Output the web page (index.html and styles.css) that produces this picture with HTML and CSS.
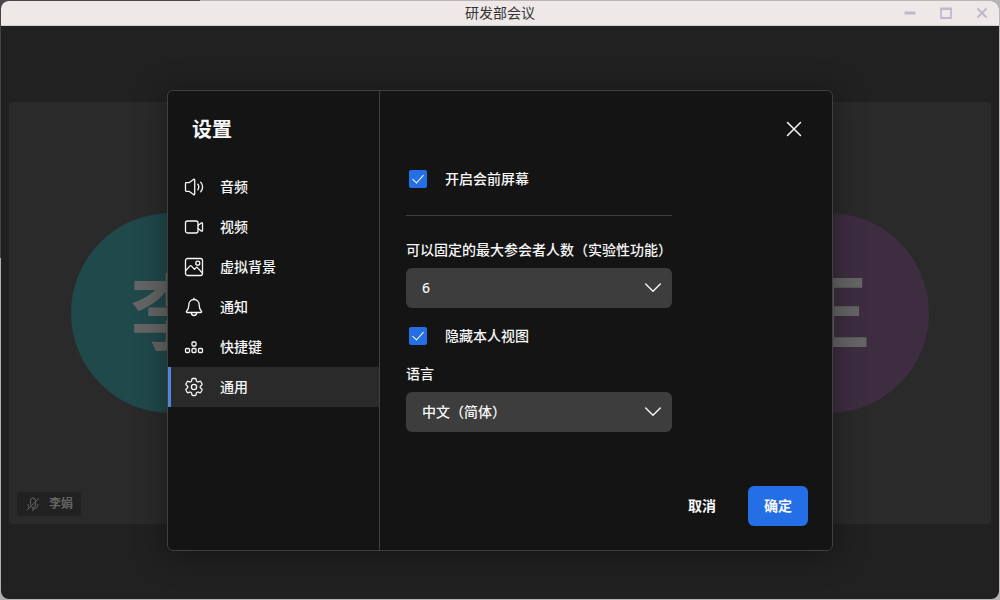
FILE: index.html
```html
<!DOCTYPE html>
<html lang="zh-CN">
  <head>
    <meta charset="UTF-8">
    <meta name="viewport" content="width=device-width, initial-scale=1.0">
    <title>研发部会议</title>
    <link rel="stylesheet" href="styles.css">
  </head>
  <body>
    <div class="window">
      <header class="titlebar">
        <h1>研发部会议</h1>
        <div class="window-controls">
          <button type="button" aria-label="最小化">
            <svg viewBox="0 0 12 12"><path d="M.5 6h11" stroke-width="3" /></svg>
          </button>
          <button type="button" aria-label="最大化">
            <svg viewBox="0 0 12 12"><path d="M1 1v10h10V1" stroke-width="1.8" /><path d="M.1 1.7h11.8" stroke-width="2.6" /></svg>
          </button>
          <button type="button" aria-label="关闭窗口">
            <svg viewBox="0 0 12 12"><path d="M1.5 1.5l9 9M10.5 1.5l-9 9" stroke-width="2" /></svg>
          </button>
        </div>
      </header>

      <main class="stage">
        <div class="tile">
          <div class="avatar avatar-teal">李</div>
          <div class="name-tag">
            <svg viewBox="0 0 14 14">
              <path d="M4.5 8V3.5a2.500 2.500 0 0 1 5 0M9.5 5v3a2.500 2.500 0 0 1-4 2M2 7.500c0 1.500.5 2.500 1.300 3.300M12 7.500c0 2.500-2 4.500-5 4.500M7 12v1.700M1 13L12.800 1.500" />
            </svg>
            <span>李娟</span>
          </div>
        </div>
        <div class="tile"></div>
        <div class="tile">
          <div class="avatar avatar-purple">王</div>
        </div>

        <div class="overlay">
          <section class="dialog" role="dialog" aria-labelledby="dialog-title">
            <aside class="sidebar">
              <h2 id="dialog-title">设置</h2>
              <nav>
                <a class="nav-item" href="#audio">
                  <svg viewBox="0 0 20 20">
                    <path d="M1.500 6.500v7c0 .5.4.8.8.8H5l4.500 3.300c.6.4 1.200 0 1.200-.6V3c0-.6-.6-1-1.200-.6L5 5.700H2.300c-.4 0-.8.3-.8.8z" />
                    <path d="M13.800 7.200c1.200 1.700 1.200 3.900 0 5.600M16.700 5.200c2.300 2.900 2.300 6.700 0 9.600" />
                  </svg>
                  音频
                </a>
                <a class="nav-item" href="#video">
                  <svg viewBox="0 0 20 20">
                    <rect x="1.500" y="4" width="12.500" height="12" rx="2" />
                    <path d="M14 8.500l3.300-2.600c.5-.4 1.200 0 1.200.6v7c0 .6-.7 1-1.200.6L14 11.500" />
                  </svg>
                  视频
                </a>
                <a class="nav-item" href="#background">
                  <svg viewBox="0 0 20 20">
                    <rect x="1.500" y="1.500" width="17" height="17" rx="2" />
                    <circle cx="13.800" cy="6.200" r="2" />
                    <path d="M1.800 13.500l4.300-4.600c.4-.4.8-.4 1.200 0l3.200 3.500 1.700-1.800c.4-.4.8-.4 1.200 0l5 5.400" />
                  </svg>
                  虚拟背景
                </a>
                <a class="nav-item" href="#notifications">
                  <svg viewBox="0 0 20 20">
                    <path d="M10 2.500c-3.200 0-5.200 2.500-5.200 5.700 0 3-.5 4.300-2.100 5.800-.6.600-.3 1.500.5 1.500h13.600c.8 0 1.100-.9.500-1.500-1.600-1.500-2.100-2.800-2.100-5.800 0-3.200-2-5.700-5.200-5.700zM10 1.200v1.300M7.300 15.800a2.700 2.700 0 0 0 5.400 0" />
                  </svg>
                  通知
                </a>
                <a class="nav-item" href="#shortcuts">
                  <svg viewBox="0 0 20 20">
                    <rect x="8" y="5" width="4" height="4" rx="1" />
                    <rect x="1.500" y="11.500" width="4" height="4" rx="1" />
                    <rect x="8" y="11.500" width="4" height="4" rx="1" />
                    <rect x="14.500" y="11.500" width="4" height="4" rx="1" />
                  </svg>
                  快捷键
                </a>
                <a class="nav-item active" href="#general" aria-current="page">
                  <svg viewBox="0 0 20 20">
                    <path d="M8.800 1.500h2.400c.5 0 .8.3.9.8l.3 1.500c.2.8 1 1.300 1.800 1l1.400-.5c.5-.2.900 0 1.200.4l1.200 2.100c.2.4.1.900-.2 1.200l-1.200 1c-.6.500-.6 1.500 0 2l1.200 1c.3.3.4.8.2 1.200l-1.200 2.100c-.3.400-.7.600-1.200.4l-1.400-.5c-.8-.3-1.600.2-1.800 1l-.3 1.500c-.1.500-.4.800-.9.800H8.800c-.5 0-.8-.3-.9-.8l-.3-1.500c-.2-.8-1-1.300-1.800-1l-1.400.5c-.5.200-.9 0-1.200-.4L2 13.200c-.2-.4-.1-.9.2-1.200l1.200-1c.6-.5.6-1.500 0-2L2.200 8c-.3-.3-.4-.8-.2-1.200l1.200-2.100c.3-.4.7-.6 1.200-.4l1.400.5c.8.3 1.600-.2 1.800-1l.3-1.500c.1-.5.4-.8.7-.8z" />
                    <circle cx="10" cy="10" r="2.600" />
                  </svg>
                  通用
                </a>
              </nav>
            </aside>

            <form class="panel">
              <div class="panel-header">
                <button class="close" type="button" aria-label="关闭">
                  <svg viewBox="0 0 16 16"><path d="M1.500 1.500l13 13M14.500 1.500l-13 13" /></svg>
                </button>
              </div>

              <div class="fields">
                <div class="check-row">
                  <input type="checkbox" id="preview" checked>
                  <label for="preview">开启会前屏幕</label>
                </div>
                <hr>
                <label class="field-label" for="max-pinned">可以固定的最大参会者人数（实验性功能）</label>
                <div class="select">
                  <select id="max-pinned">
                    <option>6</option>
                  </select>
                  <svg viewBox="0 0 16 16"><path d="M.7 4L8 11.300 15.300 4" /></svg>
                </div>
                <div class="check-row spaced">
                  <input type="checkbox" id="hide-self" checked>
                  <label for="hide-self">隐藏本人视图</label>
                </div>
                <label class="field-label" for="language">语言</label>
                <div class="select">
                  <select id="language">
                    <option>中文（简体）</option>
                  </select>
                  <svg viewBox="0 0 16 16"><path d="M.7 4L8 11.300 15.300 4" /></svg>
                </div>
              </div>

              <div class="actions">
                <button class="btn" type="button">取消</button>
                <button class="btn btn-primary" type="submit">确定</button>
              </div>
            </form>
          </section>
        </div>
      </main>
    </div>
  </body>
</html>
```

FILE: styles.css
```css
:root {
  --bg: #212121;
  --tile: #2a2a2a;
  --dialog: #141414;
  --line: #404040;
  --text: #f7f7f7;
  --muted: #656565;
  --primary: #246fe5;
}

* {
  box-sizing: border-box;
}

body {
  margin: 0;
  padding: 1px;
  min-height: 100vh;
  display: flex;
  background: linear-gradient(to right, #4c464c 20%, #b8b6b6 20%) top / 100% 1px no-repeat,
    linear-gradient(#45424a 43%, #b0b0b0 43%) left / 8px 100% no-repeat,
    #b8b6b6;
  color: var(--text);
  font-family: "Noto Sans", "Noto Sans CJK SC", sans-serif;
  font-size: 14px;
  line-height: 20px;
}

button, select {
  margin: 0;
  border: 0;
  font: inherit;
  color: inherit;
  background: none;
}

svg {
  display: block;
  flex: none;
  fill: none;
  stroke: currentColor;
  stroke-linecap: round;
  stroke-linejoin: round;
}

.window {
  flex: 1;
  display: flex;
  flex-direction: column;
  border-radius: 8px;
  overflow: hidden;
  background: var(--bg);
}

.titlebar {
  display: grid;
  grid-template-columns: 1fr auto 1fr;
  align-items: center;
  height: 25px;
  padding: 0 9px;
  background: #eee8e8;
  border-bottom: 1px solid #d2d0d2;
}

.titlebar h1 {
  grid-column: 2;
  margin: 0;
  color: #333;
  font-size: 14px;
  font-weight: 400;
}

.window-controls {
  display: flex;
  justify-content: flex-end;
  gap: 20px;
}

.window-controls button {
  width: 16px;
  padding: 2px;
  color: #c1b9cb;
}

.window-controls svg {
  width: 12px;
  height: 12px;
  stroke-linecap: butt;
}

/* participants */

.stage {
  position: relative;
  flex: 1;
  display: flex;
  gap: 5px;
  padding: 76px 8px 75px;
}

.tile {
  position: relative;
  flex: 1;
  display: flex;
  align-items: center;
  justify-content: center;
  background: var(--tile);
  border-radius: 4px;
}

.avatar {
  width: 200px;
  height: 200px;
  border-radius: 50%;
  color: var(--muted);
  font-size: 82px;
  font-weight: 700;
  line-height: 196px;
  text-align: center;
}

.avatar-teal {
  background: #20494b;
}

.avatar-purple {
  background: #3e2d41;
}

.name-tag {
  position: absolute;
  left: 8px;
  bottom: 8px;
  display: flex;
  align-items: center;
  gap: 8px;
  height: 24px;
  padding: 0 8px;
  border-radius: 4px;
  background: var(--bg);
  color: var(--muted);
  font-size: 12px;
  font-weight: 700;
}

.name-tag svg {
  width: 16px;
  height: 14px;
}

/* settings dialog */

.overlay {
  position: absolute;
  inset: 0;
  display: flex;
  align-items: center;
  justify-content: center;
  padding-top: 16px;
}

.dialog {
  display: flex;
  width: 666px;
  max-width: 100%;
  border: 1px solid var(--line);
  border-radius: 6px;
  background: var(--dialog);
  box-shadow: 0 4px 32px rgba(0, 0, 0, 0.4);
  overflow: hidden;
}

.sidebar {
  width: 212px;
  padding-top: 24px;
  border-right: 1px solid var(--line);
}

.sidebar h2 {
  margin: 0 24px 22px;
  font-size: 20px;
  font-weight: 700;
  line-height: 30px;
}

.nav-item {
  display: flex;
  align-items: center;
  gap: 16px;
  height: 40px;
  padding: 0 13px;
  border-left: 3px solid transparent;
  color: var(--text);
  font-weight: 500;
  text-decoration: none;
}

.nav-item svg {
  width: 20px;
  height: 20px;
  stroke-width: 1.3;
}

.nav-item.active {
  background: #2a2a2a;
  border-left-color: #5087de;
}

.panel {
  flex: 1;
  padding: 24px 24px 24px 26px;
}

.panel-header {
  display: flex;
  justify-content: flex-end;
}

.close {
  padding: 6px;
}

.close svg {
  width: 16px;
  height: 16px;
  stroke-width: 1.5;
}

.fields {
  width: 266px;
  padding-top: 16px;
  font-weight: 500;
}

.fields hr {
  margin: 16px 0 24px;
  border: 0;
  border-top: 1px solid var(--line);
}

.check-row {
  display: flex;
  align-items: center;
  gap: 18px;
  height: 40px;
}

.check-row.spaced {
  margin: 8px 0;
}

.check-row input {
  appearance: none;
  display: flex;
  justify-content: center;
  width: 18px;
  height: 18px;
  margin: 0 0 0 3px;
  border-radius: 2px;
  background: #4a4a4a;
}

.check-row input:checked {
  background: var(--primary);
}

.check-row input:checked::after {
  content: "";
  width: 5px;
  height: 10px;
  margin-top: 2px;
  border: solid #fff;
  border-width: 0 1px 1px 0;
  transform: rotate(42deg);
}

.field-label {
  display: block;
  margin-bottom: 8px;
  white-space: nowrap;
}

.select {
  position: relative;
}

.select select {
  appearance: none;
  display: block;
  width: 100%;
  height: 40px;
  padding: 0 40px 0 16px;
  border-radius: 6px;
  background: #3d3d3d;
}

.select svg {
  position: absolute;
  top: 12px;
  right: 11px;
  width: 16px;
  height: 16px;
  stroke-width: 1.4;
  pointer-events: none;
}

.actions {
  display: flex;
  justify-content: flex-end;
  gap: 16px;
  margin-top: 54px;
}

.btn {
  height: 40px;
  padding: 0 16px;
  border-radius: 6px;
  font-weight: 700;
}

.btn-primary {
  background: var(--primary);
}
```
